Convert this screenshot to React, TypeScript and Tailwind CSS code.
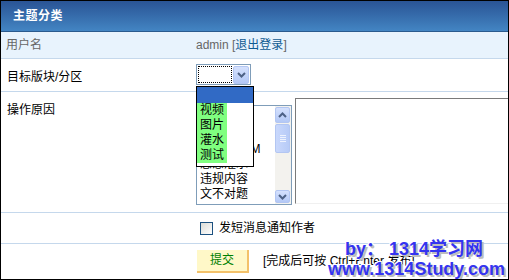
import React from 'react';

const font = { fontFamily: '"Liberation Sans", "Noto Sans CJK SC", sans-serif' };

const Chevron = ({ up = false }: { up?: boolean }) => (
  <svg width="9" height="6" viewBox="0 0 9 6" className={up ? 'rotate-180' : ''}>
    <path d="M1 1 L4.5 4.5 L8 1" fill="none" stroke="#4d6185" strokeWidth="2" />
  </svg>
);

const reasons = ['自定义', '--------', '广告/SPAM', '恶意灌水', '违规内容', '文不对题'];

const shadow = { textShadow: '2px 2px 0 #bdbdbd, -1px -1px 0 #fff, 1px -1px 0 #fff, -1px 1px 0 #fff' };

export default function App() {
  return (
    <div
      className="relative w-[509px] h-[280px] border border-black bg-white overflow-hidden text-[12px] leading-[15px] text-black"
      style={font}
    >
      {/* header */}
      <div className="h-[31px] border-b border-[#2a5a8e] bg-gradient-to-b from-[#2a5495] to-[#4385c3] flex items-center pl-[12px]">
        <span className="text-white font-bold text-[12px] tracking-[0.5px]">主题分类</span>
      </div>

      {/* user */}
      <div className="h-[27px] flex items-center bg-[#e8f3fd] border-b border-[#c5d8ec]">
        <div className="w-[195px] shrink-0 pl-[5px] text-[#666]">用户名</div>
        <div className="text-[#666]">
          admin [<span className="text-[#0f5a92]">退出登录</span>]
        </div>
      </div>

      {/* target forum */}
      <div className="h-[33px] flex border-b border-[#c5d8ec]">
        <div className="w-[195px] shrink-0 pl-[6px] pt-[11px]">目标版块/分区</div>
        <div className="pt-[5px]">
          <div className="w-[55px] h-[21px] border border-[#7f9db9] bg-white flex items-center p-[1px]">
            <div className="w-[35px] h-[17px] border border-dotted border-black" />
            <div className="ml-[1px] w-[16px] h-[18px] border border-[#b3c6f2] rounded-[2px] bg-gradient-to-b from-[#d5e1fd] to-[#b3c8f6] flex items-center justify-center">
              <Chevron />
            </div>
          </div>
        </div>
      </div>

      {/* reason */}
      <div className="h-[121px] flex border-b border-[#c5d8ec]">
        <div className="w-[195px] shrink-0 pl-[6px] pt-[11px]">操作原因</div>
        <div className="flex items-start min-w-0">
          <div className="shrink-0 mt-[13px] w-[96px] h-[100px] border border-[#7f9db9] bg-white flex">
            <div className="flex-1 pt-[6px] pl-[3px] whitespace-nowrap overflow-hidden">
              {reasons.map((r) => (
                <div key={r} className="h-[15px] leading-[15px]">
                  {r}
                </div>
              ))}
            </div>
            <div className="w-[16px] p-[1px] pl-0 flex flex-col bg-[#f3f2ee]">
              <div className="h-[16px] border border-[#b3c6f2] rounded-[2px] bg-gradient-to-b from-[#d5e1fd] to-[#b3c8f6] flex items-center justify-center">
                <Chevron up />
              </div>
              <div className="mt-[1px] h-[29px] border border-[#b3c6f2] rounded-[2px] bg-gradient-to-r from-[#c9d8fc] to-[#b7cbf7] flex flex-col items-center justify-center gap-[1px]">
                <div className="w-[6px] h-px bg-[#eef3fe]" />
                <div className="w-[6px] h-px bg-[#eef3fe]" />
                <div className="w-[6px] h-px bg-[#eef3fe]" />
                <div className="w-[6px] h-px bg-[#eef3fe]" />
              </div>
              <div className="flex-1" />
              <div className="h-[13px] border border-[#b3c6f2] rounded-[2px] bg-gradient-to-b from-[#d5e1fd] to-[#b3c8f6] flex items-center justify-center">
                <Chevron />
              </div>
            </div>
          </div>
          <div className="shrink-0 ml-[3px] mt-[6px] w-[240px] h-[106px] border-t border-l border-[#7a7a7a] border-b-[#f0f0f0] border-b bg-white" />
        </div>
      </div>

      {/* notify */}
      <div className="h-[31px] flex items-center border-b border-[#c5d8ec]">
        <div className="w-[195px] shrink-0" />
        <div className="flex items-center pl-[4px]">
          <div className="w-[13px] h-[13px] border border-[#1c5180] bg-gradient-to-br from-[#dcdcd6] to-white" />
          <span className="ml-[6px]">发短消息通知作者</span>
        </div>
      </div>

      {/* submit */}
      <div className="h-[35px] flex items-center">
        <div className="w-[195px] shrink-0" />
        <div className="flex items-center pl-[1px] whitespace-nowrap">
          <button className="w-[52px] h-[23px] bg-[#fff8c8] border-r-2 border-b-2 border-[#f3c16a] text-[#008000] text-[12px] flex items-center justify-center">
            提交
          </button>
          <span className="ml-[14px]">[完成后可按 Ctrl+Enter 发布]</span>
        </div>
      </div>

      {/* dropdown popup */}
      <div className="absolute left-[195px] top-[85px] w-[58px] h-[81px] border border-black bg-white">
        <div className="h-[16px] bg-[#316ac5]" />
        {['视频', '图片', '灌水', '测试'].map((t) => (
          <div key={t} className="h-[15px] leading-[15px]">
            <span className="inline-block bg-[#80ff80] pl-[3px] pr-[3px]">{t}</span>
          </div>
        ))}
      </div>

      {/* watermark */}
      <div className="absolute left-[344px] top-[238px] text-[18px] font-bold text-[#3434f0] leading-[20px] whitespace-nowrap" style={shadow}>
        by： 1314学习网
      </div>
      <div className="absolute left-[327px] top-[258px] text-[18px] font-bold text-[#3434f0] leading-[20px] whitespace-nowrap" style={shadow}>
        www.1314Study.com
      </div>
    </div>
  );
}
